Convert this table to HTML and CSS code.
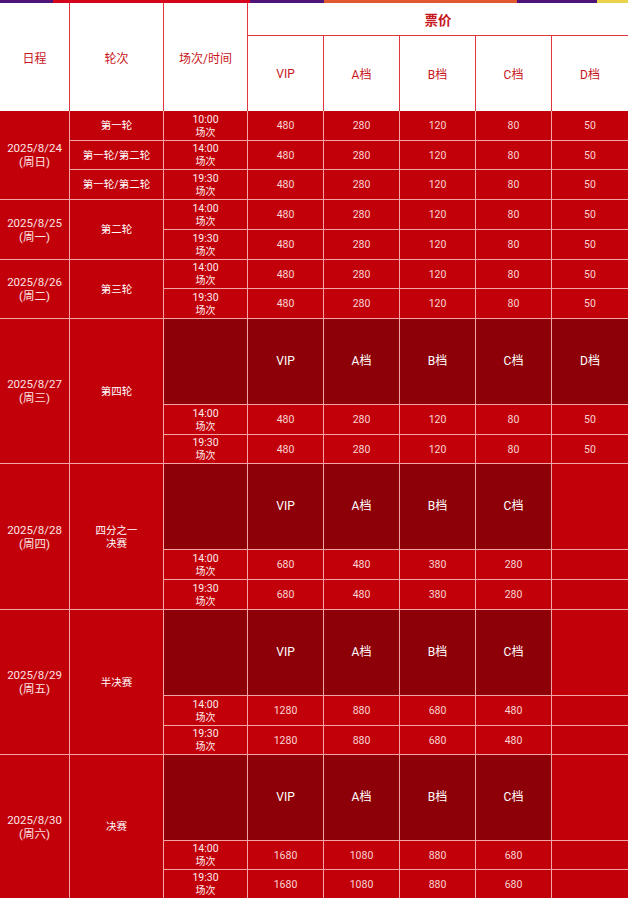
FILE: index.html
```html
<!DOCTYPE html>
<html lang="zh-CN">
<head>
<meta charset="utf-8">
<title>票价表</title>
<link rel="stylesheet" href="styles.css">
</head>
<body>
<div class="page">
  <div class="strip">
    <span class="s s1"></span><span class="s s2"></span><span class="s s3"></span><span class="s s4"></span><span class="s s5"></span><span class="s s6"></span>
  </div>
  <div class="head">
    <div class="hc tall">日程</div>
    <div class="hc tall">轮次</div>
    <div class="hc tall">场次/时间</div>
    <div class="hc price">票价</div>
    <div class="hc">VIP</div>
    <div class="hc">A档</div>
    <div class="hc">B档</div>
    <div class="hc">C档</div>
    <div class="hc">D档</div>
  </div>
  <div class="body">
    <!-- 8/24 -->
    <div class="c date r3">2025/8/24<br>(周日)</div>
    <div class="c rd">第一轮</div>
    <div class="c tm"><span>10:00</span><small>场次</small></div>
    <div class="c p">480</div><div class="c p">280</div><div class="c p">120</div><div class="c p">80</div><div class="c p">50</div>
    <div class="c rd">第一轮/第二轮</div>
    <div class="c tm"><span>14:00</span><small>场次</small></div>
    <div class="c p">480</div><div class="c p">280</div><div class="c p">120</div><div class="c p">80</div><div class="c p">50</div>
    <div class="c rd">第一轮/第二轮</div>
    <div class="c tm"><span>19:30</span><small>场次</small></div>
    <div class="c p">480</div><div class="c p">280</div><div class="c p">120</div><div class="c p">80</div><div class="c p">50</div>
    <!-- 8/25 -->
    <div class="c date r2">2025/8/25<br>(周一)</div>
    <div class="c rd r2">第二轮</div>
    <div class="c tm"><span>14:00</span><small>场次</small></div>
    <div class="c p">480</div><div class="c p">280</div><div class="c p">120</div><div class="c p">80</div><div class="c p">50</div>
    <div class="c tm"><span>19:30</span><small>场次</small></div>
    <div class="c p">480</div><div class="c p">280</div><div class="c p">120</div><div class="c p">80</div><div class="c p">50</div>
    <!-- 8/26 -->
    <div class="c date r2">2025/8/26<br>(周二)</div>
    <div class="c rd r2">第三轮</div>
    <div class="c tm"><span>14:00</span><small>场次</small></div>
    <div class="c p">480</div><div class="c p">280</div><div class="c p">120</div><div class="c p">80</div><div class="c p">50</div>
    <div class="c tm"><span>19:30</span><small>场次</small></div>
    <div class="c p">480</div><div class="c p">280</div><div class="c p">120</div><div class="c p">80</div><div class="c p">50</div>
    <!-- 8/27 -->
    <div class="c date r3">2025/8/27<br>(周三)</div>
    <div class="c rd r3">第四轮</div>
    <div class="c dk"></div>
    <div class="c dk">VIP</div><div class="c dk">A档</div><div class="c dk">B档</div><div class="c dk">C档</div><div class="c dk">D档</div>
    <div class="c tm"><span>14:00</span><small>场次</small></div>
    <div class="c p">480</div><div class="c p">280</div><div class="c p">120</div><div class="c p">80</div><div class="c p">50</div>
    <div class="c tm"><span>19:30</span><small>场次</small></div>
    <div class="c p">480</div><div class="c p">280</div><div class="c p">120</div><div class="c p">80</div><div class="c p">50</div>
    <!-- 8/28 -->
    <div class="c date r3">2025/8/28<br>(周四)</div>
    <div class="c rd r3">四分之一<br>决赛</div>
    <div class="c dk"></div>
    <div class="c dk">VIP</div><div class="c dk">A档</div><div class="c dk">B档</div><div class="c dk">C档</div><div class="c"></div>
    <div class="c tm"><span>14:00</span><small>场次</small></div>
    <div class="c p">680</div><div class="c p">480</div><div class="c p">380</div><div class="c p">280</div><div class="c"></div>
    <div class="c tm"><span>19:30</span><small>场次</small></div>
    <div class="c p">680</div><div class="c p">480</div><div class="c p">380</div><div class="c p">280</div><div class="c"></div>
    <!-- 8/29 -->
    <div class="c date r3">2025/8/29<br>(周五)</div>
    <div class="c rd r3">半决赛</div>
    <div class="c dk"></div>
    <div class="c dk">VIP</div><div class="c dk">A档</div><div class="c dk">B档</div><div class="c dk">C档</div><div class="c"></div>
    <div class="c tm"><span>14:00</span><small>场次</small></div>
    <div class="c p">1280</div><div class="c p">880</div><div class="c p">680</div><div class="c p">480</div><div class="c"></div>
    <div class="c tm"><span>19:30</span><small>场次</small></div>
    <div class="c p">1280</div><div class="c p">880</div><div class="c p">680</div><div class="c p">480</div><div class="c"></div>
    <!-- 8/30 -->
    <div class="c date r3">2025/8/30<br>(周六)</div>
    <div class="c rd r3">决赛</div>
    <div class="c dk"></div>
    <div class="c dk">VIP</div><div class="c dk">A档</div><div class="c dk">B档</div><div class="c dk">C档</div><div class="c"></div>
    <div class="c tm"><span>14:00</span><small>场次</small></div>
    <div class="c p">1680</div><div class="c p">1080</div><div class="c p">880</div><div class="c p">680</div><div class="c"></div>
    <div class="c tm"><span>19:30</span><small>场次</small></div>
    <div class="c p">1680</div><div class="c p">1080</div><div class="c p">880</div><div class="c p">680</div><div class="c"></div>
  </div>
</div>
</body>
</html>
```
FILE: styles.css
```css
html, body {
  margin: 0;
  padding: 0;
  background: #c20009;
}
.page {
  width: 628px;
  height: 898px;
  overflow: hidden;
  font-family: Roboto, "Noto Sans CJK SC", sans-serif;
}
.strip {
  display: flex;
  height: 3px;
}
.s { display: block; height: 3px; }
.s1 { width: 53px; background: #4f137a; }
.s2 { width: 197px; background: #d3041c; }
.s3 { width: 74px; background: #4f137a; }
.s4 { width: 193px; background: #e2582e; }
.s5 { width: 80px; background: #4f137a; }
.s6 { flex: 1; background: #ead24a; }

.head {
  display: grid;
  grid-template-columns: 69px 93px 83px 75px 75px 75px 75px 76px;
  grid-template-rows: 32px 75px;
  column-gap: 1px;
  row-gap: 1px;
  background: #e2363f;
}
.hc {
  background: #fff;
  color: #c8151d;
  font-size: 12px;
  display: flex;
  align-items: center;
  justify-content: center;
}
.hc.tall { grid-row: span 2; }
.hc.price {
  grid-column: span 5;
  font-size: 13.5px;
  font-weight: 700;
}

.body {
  display: grid;
  grid-template-columns: 69px 93px 83px 75px 75px 75px 75px 76px;
  grid-template-rows: 29px 28px 29px 29px 29px 28px 29px 85px 29px 28px 85px 29px 29px 85px 29px 28px 85px 28px 28px;
  gap: 1px;
  background: #f2a4a6;
}
.c {
  background: #c20009;
  color: #fbe3e3;
  display: flex;
  align-items: center;
  justify-content: center;
  text-align: center;
  font-size: 11px;
  line-height: 13px;
}
.r2 { grid-row: span 2; }
.r3 { grid-row: span 3; }
.date { font-size: 11.5px; line-height: 14px; }
.rd { font-size: 10.5px; color: #fff; }
.tm {
  flex-direction: column;
  font-size: 10.5px;
  line-height: 13px;
  color: #fdecec;
}
.tm small { display: block; font-size: 10px; line-height: 13px; }
.p { font-size: 10.5px; color: #f9d4d4; }
.dk {
  background: #8d0007;
  color: #fff;
  font-size: 12px;
}
```
